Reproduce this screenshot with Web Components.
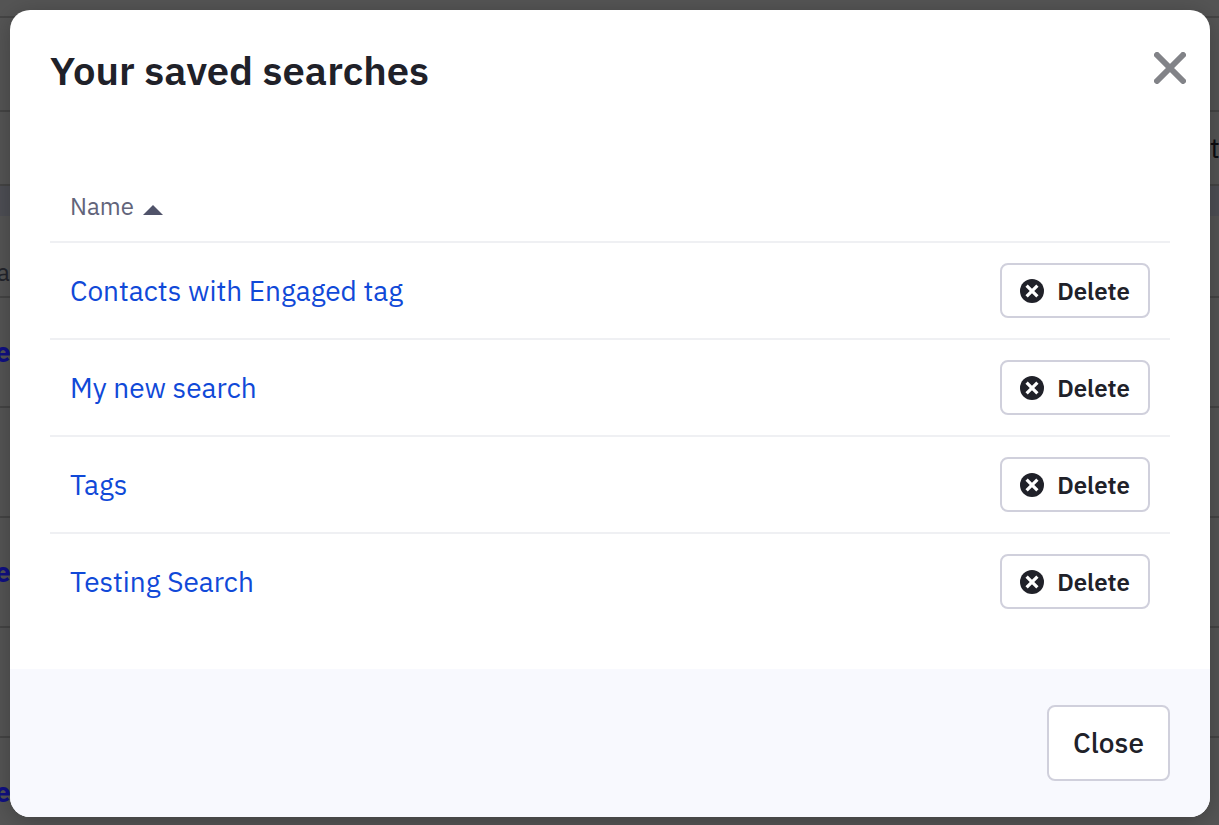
<!DOCTYPE html>
<html lang="en">
<head>
<meta charset="utf-8">
<meta name="viewport" content="width=device-width, initial-scale=1">
<title>Your saved searches</title>
<style>
  body {
    margin: 0;
    min-height: 100vh;
    background: #525252;
    font-family: "IBM Plex Sans", Roboto, "Noto Sans", sans-serif;
    color: #202129;
  }
</style>
</head>
<body>
<contacts-page></contacts-page>
<modal-dialog heading="Your saved searches">
  <saved-searches></saved-searches>
  <ui-button slot="footer" size="large">Close</ui-button>
</modal-dialog>

<script>
  class ContactsPage extends HTMLElement {
    constructor() {
      super();
      this.attachShadow({ mode: 'open' });
    }

    connectedCallback() {
      const rows = ['e', '', 'e', '', 'e'];
      this.shadowRoot.innerHTML = `
        <style>
          :host {
            display: block;
            height: 100vh;
            overflow: hidden;
            background: #555;
            line-height: 32px;
          }
          .top { height: 16px; }
          .toolbar, .filters, .head, .row {
            box-sizing: border-box;
            border-top: 2px solid #454545;
            display: flex;
            justify-content: space-between;
          }
          .toolbar { height: 94px; }
          .filters { height: 74px; align-items: center; }
          .filters span {
            width: 9px;
            font-size: 28px;
            color: #0c0c10;
          }
          .head {
            height: 112px;
            align-items: flex-end;
            padding-bottom: 8px;
            background: linear-gradient(#4e4f55 30px, #555 30px);
            font-size: 24px;
            text-indent: -3px;
            color: #24252c;
          }
          .row {
            height: 110px;
            align-items: center;
            font-size: 28px;
            font-weight: 700;
            text-indent: -5px;
            color: #101084;
          }
        </style>
        <div class="top"></div>
        <div class="toolbar"></div>
        <div class="filters"><b></b><span>t</span></div>
        <div class="head">ar</div>
        ${rows.map(text => `<div class="row">${text}</div>`).join('')}
      `;
    }
  }

  class UiButton extends HTMLElement {
    constructor() {
      super();
      this.attachShadow({ mode: 'open' });
    }

    connectedCallback() {
      this.shadowRoot.innerHTML = `
        <style>
          :host { display: inline-block; vertical-align: middle; }
          button {
            box-sizing: border-box;
            display: flex;
            align-items: center;
            justify-content: center;
            gap: 13px;
            min-width: 150px;
            height: 55px;
            padding: 0 18px;
            border: 2px solid #d0d0dc;
            border-radius: 8px;
            background: #fff;
            color: #202129;
            font: inherit;
            font-size: 24px;
            font-weight: 600;
            line-height: 32px;
            cursor: pointer;
          }
          :host([size="large"]) button {
            min-width: 123px;
            height: 76px;
            font-size: 28px;
            font-weight: 500;
          }
          button:hover { background: #f8f9fe; }
        </style>
        <button type="button"><slot name="icon"></slot><slot></slot></button>
      `;
    }
  }

  class SavedSearches extends HTMLElement {
    constructor() {
      super();
      this.attachShadow({ mode: 'open' });
      this.searches = ['Contacts with Engaged tag', 'My new search', 'Tags', 'Testing Search'];
    }

    connectedCallback() {
      this.render();
    }

    renderRow(name) {
      return `
        <tr>
          <td><a href="#">${name}</a></td>
          <td class="action">
            <ui-button>
              <svg slot="icon" width="24" height="24" viewBox="0 0 24 24" aria-hidden="true">
                <circle cx="12" cy="12" r="12" fill="#202129"/>
                <path d="M6.6 6.6l10.8 10.8M17.4 6.6L6.6 17.4" stroke="#fff" stroke-width="3.2"/>
              </svg>
              Delete
            </ui-button>
          </td>
        </tr>
      `;
    }

    render() {
      this.shadowRoot.innerHTML = `
        <style>
          :host { display: block; }
          table {
            width: 100%;
            border-spacing: 0;
          }
          th {
            padding: 17px 20px 19px;
            border-bottom: 2px solid #eff0f3;
            text-align: left;
            font-size: 24px;
            font-weight: 400;
            line-height: 32px;
            color: #62647a;
          }
          th svg { margin-left: 3px; }
          td {
            padding: 20px;
            border-bottom: 2px solid #eff0f3;
            font-size: 28px;
            line-height: 36px;
          }
          tr:last-child td { border-bottom: 0; }
          .action { text-align: right; line-height: 0; }
          a { color: #1049d8; text-decoration: none; }
          a:hover { text-decoration: underline; }
        </style>
        <table>
          <thead>
            <tr>
              <th scope="col" colspan="2" aria-sort="ascending">
                Name
                <svg width="20" height="10" viewBox="0 0 20 10" aria-hidden="true">
                  <path d="M0 10L10 0l10 10z" fill="#50536a"/>
                </svg>
              </th>
            </tr>
          </thead>
          <tbody>${this.searches.map(name => this.renderRow(name)).join('')}</tbody>
        </table>
      `;
    }
  }

  class ModalDialog extends HTMLElement {
    constructor() {
      super();
      this.attachShadow({ mode: 'open' });
    }

    connectedCallback() {
      this.shadowRoot.innerHTML = `
        <style>
          /* lies over the page */
          :host {
            position: absolute;
            inset: 0;
            display: block;
            padding: 10px 9px 8px 10px;
          }
          .dialog {
            overflow: hidden;
            border-radius: 20px;
            background: #fff;
            box-shadow: 0 4px 24px rgba(0, 0, 0, 0.25);
          }
          header {
            display: flex;
            align-items: flex-start;
            justify-content: space-between;
            padding: 36px 24px 39px 40px;
          }
          h2 {
            margin: 0;
            font-size: 40px;
            font-weight: 600;
            line-height: 48px;
          }
          .close {
            display: flex;
            padding: 6px 0;
            border: 0;
            background: none;
            cursor: pointer;
          }
          .body { padding: 40px; }
          footer {
            display: flex;
            justify-content: flex-end;
            padding: 36px 40px;
            background: #f8f9fe;
          }
        </style>
        <div class="dialog" role="dialog" aria-labelledby="heading">
          <header>
            <h2 id="heading">${this.getAttribute('heading')}</h2>
            <button class="close" type="button" aria-label="Close dialog">
              <svg width="32" height="32" viewBox="0 0 32 32" aria-hidden="true">
                <path d="M3 3l26 26M29 3L3 29" stroke="#828388" stroke-width="6" stroke-linecap="round"/>
              </svg>
            </button>
          </header>
          <div class="body"><slot></slot></div>
          <footer><slot name="footer"></slot></footer>
        </div>
      `;
    }
  }

  customElements.define('contacts-page', ContactsPage);
  customElements.define('ui-button', UiButton);
  customElements.define('saved-searches', SavedSearches);
  customElements.define('modal-dialog', ModalDialog);
</script>
</body>
</html>
